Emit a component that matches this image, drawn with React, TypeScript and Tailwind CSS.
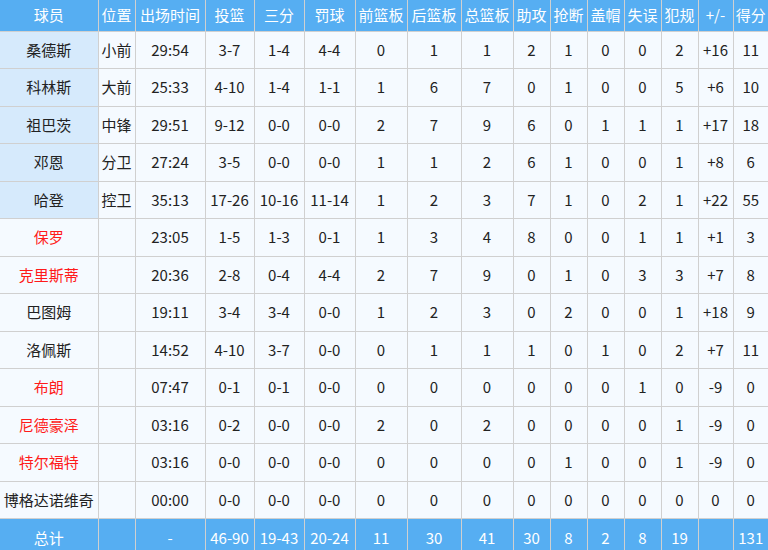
const cols = [98, 37, 70, 49, 50, 51, 52, 54, 52, 37, 37, 37, 37, 37, 35, 35]

const head = ['球员', '位置', '出场时间', '投篮', '三分', '罚球', '前篮板', '后篮板', '总篮板', '助攻', '抢断', '盖帽', '失误', '犯规', '+/-', '得分']

type Row = { name: string; pos: string; red?: boolean; starter?: boolean; stats: string[] }

const rows: Row[] = [
  { name: '桑德斯', pos: '小前', starter: true, stats: ['29:54', '3-7', '1-4', '4-4', '0', '1', '1', '2', '1', '0', '0', '2', '+16', '11'] },
  { name: '科林斯', pos: '大前', starter: true, stats: ['25:33', '4-10', '1-4', '1-1', '1', '6', '7', '0', '1', '0', '0', '5', '+6', '10'] },
  { name: '祖巴茨', pos: '中锋', starter: true, stats: ['29:51', '9-12', '0-0', '0-0', '2', '7', '9', '6', '0', '1', '1', '1', '+17', '18'] },
  { name: '邓恩', pos: '分卫', starter: true, stats: ['27:24', '3-5', '0-0', '0-0', '1', '1', '2', '6', '1', '0', '0', '1', '+8', '6'] },
  { name: '哈登', pos: '控卫', starter: true, stats: ['35:13', '17-26', '10-16', '11-14', '1', '2', '3', '7', '1', '0', '2', '1', '+22', '55'] },
  { name: '保罗', pos: '', red: true, stats: ['23:05', '1-5', '1-3', '0-1', '1', '3', '4', '8', '0', '0', '1', '1', '+1', '3'] },
  { name: '克里斯蒂', pos: '', red: true, stats: ['20:36', '2-8', '0-4', '4-4', '2', '7', '9', '0', '1', '0', '3', '3', '+7', '8'] },
  { name: '巴图姆', pos: '', stats: ['19:11', '3-4', '3-4', '0-0', '1', '2', '3', '0', '2', '0', '0', '1', '+18', '9'] },
  { name: '洛佩斯', pos: '', stats: ['14:52', '4-10', '3-7', '0-0', '0', '1', '1', '1', '0', '1', '0', '2', '+7', '11'] },
  { name: '布朗', pos: '', red: true, stats: ['07:47', '0-1', '0-1', '0-0', '0', '0', '0', '0', '0', '0', '1', '0', '-9', '0'] },
  { name: '尼德豪泽', pos: '', red: true, stats: ['03:16', '0-2', '0-0', '0-0', '2', '0', '2', '0', '0', '0', '0', '1', '-9', '0'] },
  { name: '特尔福特', pos: '', red: true, stats: ['03:16', '0-0', '0-0', '0-0', '0', '0', '0', '0', '1', '0', '0', '1', '-9', '0'] },
  { name: '博格达诺维奇', pos: '', stats: ['00:00', '0-0', '0-0', '0-0', '0', '0', '0', '0', '0', '0', '0', '0', '0', '0'] },
]

const total = ['总计', '', '-', '46-90', '19-43', '20-24', '11', '30', '41', '30', '8', '2', '8', '19', '', '131']

export default function App() {
  return (
    <div className="w-[768px] h-[550px] overflow-hidden bg-white font-['Noto_Sans_CJK_SC','Noto_Sans',sans-serif] text-[15px]">
      <table className="table-fixed border-collapse w-[768px]">
        <colgroup>
          {cols.map((w, i) => <col key={i} style={{ width: w }} />)}
        </colgroup>
        <thead>
          <tr className="h-[31px] bg-[#56aef2] text-white">
            {head.map((h, i) => (
              <th key={i} className="font-normal p-0 text-center whitespace-nowrap border-x border-[#d0d0d0] first:border-l-0 last:border-r-0 border-b">{h}</th>
            ))}
          </tr>
        </thead>
        <tbody className="text-[#222]">
          {rows.map((r, ri) => (
            <tr key={ri} className="h-[37.5px]">
              <td className={`p-0 text-center whitespace-nowrap border border-[#d0d0d0] border-l-0 ${r.starter ? 'bg-[#d6eafc]' : 'bg-[#f5faff]'} ${r.red ? 'text-[#ff1a1a]' : ''}`}>{r.name}</td>
              <td className="p-0 text-center whitespace-nowrap border border-[#d0d0d0] bg-[#f5faff]">{r.pos}</td>
              {r.stats.map((s, si) => (
                <td key={si} className="p-0 text-center whitespace-nowrap border border-[#d0d0d0] bg-[#f5faff] last:border-r-0">{s}</td>
              ))}
            </tr>
          ))}
          <tr className="h-[38px] bg-[#56aef2] text-white">
            {total.map((t, i) => (
              <td key={i} className="p-0 text-center whitespace-nowrap border-x border-t border-[#d0d0d0] first:border-l-0 last:border-r-0">{t}</td>
            ))}
          </tr>
        </tbody>
      </table>
    </div>
  )
}
